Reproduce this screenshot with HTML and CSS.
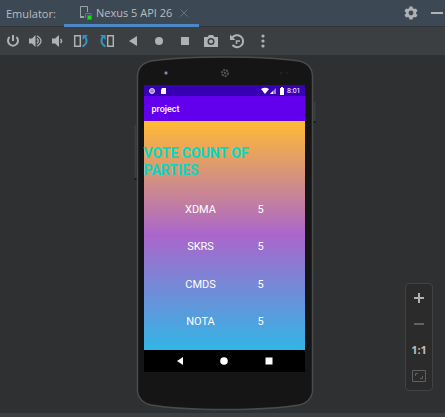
FILE: index.html
```html
<!DOCTYPE html>
<html lang="en">
<head>
<meta charset="utf-8">
<title>Emulator</title>
<link rel="stylesheet" href="styles.css">
</head>
<body>
<header class="titlebar">
  <span class="label">Emulator:</span>
  <div class="tab">
    <svg width="14" height="14" viewBox="0 0 14 14" fill="none"><path d="M5 11.500H2.500v-11h7V6" stroke="#9da2a7"/><path d="M2 11h4" stroke="#9da2a7" stroke-width="2"/><path d="M7.500 12V7.500H13V9" stroke="#8a5bb5"/><rect x="9.500" y="9.500" width="4" height="4" fill="#12e312" stroke="#1d9a2c"/></svg>
    <span>Nexus 5 API 26</span>
    <button class="close" aria-label="Close tab"><svg width="8" height="8" viewBox="0 0 8 8" stroke="#65717b"><path d="M.5.5l7 7M7.500.5l-7 7"/></svg></button>
  </div>
  <div class="window-tools">
    <button aria-label="Settings"><svg width="14" height="14" viewBox="-7 -7 14 14" fill="#afb1b3"><path fill-rule="evenodd" d="M-1.500-6.500h3l.4 1.800 1.300.7 1.800-.6 1.500 2.600-1.400 1.300v1.400l1.400 1.300L5 4.600 3.200 4l-1.300.7-.4 1.800h-3l-.4-1.800L-3.200 4-5 4.600-6.500 2-5.100.7V-.7L-6.500-2-5-4.600-3.200-4l1.300-.7zM0-2.400A2.400 2.400 0 1 0 0 2.400 2.400 2.400 0 1 0 0-2.400z"/></svg></button>
    <button aria-label="Hide"><svg width="12" height="2"><path d="M0 1h12" stroke="#afb1b3" stroke-width="2"/></svg></button>
  </div>
</header>
<nav class="toolbar" aria-label="Device controls">
  <button class="narrow" aria-label="Power"><svg viewBox="0 0 16 16"><path class="line" d="M4.600 4A5 5 0 1 0 11.400 4M8 2v6"/></svg></button>
  <button class="narrow" aria-label="Volume up"><svg viewBox="0 0 16 16"><path d="M2 5.500h3L8.500 2v12L5 10.500H2z"/><path class="thin" d="M10 5.500q2.500 2.500 0 5M10 2.800q8 5.200 0 10.400"/></svg></button>
  <button class="narrow" aria-label="Volume down"><svg viewBox="0 0 16 16"><path d="M3 5.500h3L10 2v12L6 10.500H3z"/><path class="mid" d="M11.500 6q2 2 0 4"/></svg></button>
  <button aria-label="Rotate left"><svg viewBox="0 0 16 16"><path class="mid" d="M1.700 2.700h5.600v10.600H1.700z"/><path class="blue" d="M9.500 13.500Q15.500 10.500 12.500 4"/><path class="bluefill" d="M9.500 7V2h5.500z"/></svg></button>
  <button aria-label="Rotate right"><svg viewBox="0 0 16 16"><path class="mid" d="M8.700 2.700h5.600v10.600H8.700z"/><path class="blue" d="M6.500 13.500Q.5 10.500 3.500 4"/><path class="bluefill" d="M6.500 7V2H1z"/></svg></button>
  <button aria-label="Back"><svg viewBox="0 0 16 16"><path d="M4 8l8-5v10z"/></svg></button>
  <button aria-label="Home"><svg viewBox="0 0 16 16"><circle cx="8" cy="8" r="4"/></svg></button>
  <button aria-label="Overview"><svg viewBox="0 0 16 16"><rect x="4" y="4" width="8" height="8"/></svg></button>
  <button aria-label="Screenshot"><svg viewBox="0 0 16 16"><path fill-rule="evenodd" d="M1 4h3.500L6 2h4l1.500 2H15v10H1zM8 5a3.500 3.500 0 1 0 0 7 3.500 3.500 0 1 0 0-7z"/><circle cx="8" cy="8.500" r="2"/></svg></button>
  <button aria-label="Snapshots"><svg viewBox="0 0 16 16"><path class="line" d="M3 5A6 6 0 1 1 3.500 12"/><path class="mid" d="M7.500 11V8H11"/><path d="M1 1.500V7h5.500z"/></svg></button>
  <button aria-label="More"><svg viewBox="0 0 16 16"><circle cx="8" cy="3" r="1.600"/><circle cx="8" cy="8" r="1.600"/><circle cx="8" cy="13" r="1.600"/></svg></button>
</nav>
<main class="stage">
  <div class="phone">
    <svg class="shell" viewBox="0 0 184 355" preserveAspectRatio="none" fill="none">
      <path d="M2.500 69v54M181.500 46v20" stroke="#3b3c3d" stroke-width="2"/>
      <path d="M1.500 123h2M180.500 66h2" stroke="#17181a" stroke-width="2"/>
      <path d="M4.500 20Q5 8 18 5Q48 1 92 1T166 5Q179 8 179.500 20V336Q178 346 166 349Q140 353.500 92 353.500T18 349Q6 346 4.500 336Z" fill="#151515" stroke="#4a4b4c" stroke-width="1.500"/>
      <circle cx="33" cy="17" r="2" fill="#4c4a63"/><circle cx="33" cy="17" r="1" fill="#a8a5c4"/>
      <circle cx="92" cy="17" r="3" stroke="#555" stroke-width="2" stroke-dasharray="2 1"/><circle cx="92" cy="17" r="1" fill="#666"/>
      <circle cx="148" cy="17" r="1.500" fill="#222"/><circle cx="154" cy="17" r="1" fill="#222"/>
    </svg>
    <section class="screen">
      <div class="status">
        <svg width="18" height="8" viewBox="0 0 18 8"><circle cx="4" cy="4" r="2.500" fill="#9886cf" stroke="#ded6f5"/><path d="M14 1h4v6h-5V3z" fill="#fff"/></svg>
        <svg class="signals" width="24" height="8" viewBox="0 0 24 8" fill="#fff"><path d="M0 2Q4-.5 8 2L4 7z"/><path d="M9 7l6-6v6z" opacity=".5"/><path d="M9 7l3-3v3z"/><path d="M19 1h1V0h2v1h1v7h-4z"/></svg>
        <span>8:01</span>
      </div>
      <div class="appbar">project</div>
      <div class="votes">
        <h1>VOTE COUNT OF PARTIES</h1>
        <table>
          <tbody>
            <tr><th scope="row">XDMA</th><td>5</td></tr>
            <tr><th scope="row">SKRS</th><td>5</td></tr>
            <tr><th scope="row">CMDS</th><td>5</td></tr>
            <tr><th scope="row">NOTA</th><td>5</td></tr>
          </tbody>
        </table>
      </div>
      <div class="navbar">
        <button aria-label="Back"><svg width="8" height="8" viewBox="0 0 8 8"><path d="M1 4l6-4v8z"/></svg></button>
        <button aria-label="Home"><svg width="8" height="8" viewBox="0 0 8 8"><circle cx="4" cy="4" r="3.800"/></svg></button>
        <button aria-label="Overview"><svg width="8" height="8" viewBox="0 0 8 8"><path d="M.5.5h7v7h-7z"/></svg></button>
      </div>
    </section>
  </div>
  <div class="zoom">
    <button aria-label="Zoom in"><svg width="14" height="14" viewBox="0 0 14 14" stroke="#afb1b3" stroke-width="2"><path d="M2 7h10M7 2v10"/></svg></button>
    <button aria-label="Zoom out"><svg width="14" height="14" viewBox="0 0 14 14" stroke="#5f6162" stroke-width="2"><path d="M2 7h10"/></svg></button>
    <button class="ratio">1:1</button>
    <button aria-label="Fit to window"><svg width="14" height="12" viewBox="0 0 14 12" fill="none" stroke="#5f6162"><path d="M.5.5h13v11H.5z"/><path d="M3.500 6V3.500H6M8 8.500h2.500V6"/></svg></button>
  </div>
</main>
<footer class="edge"></footer>
</body>
</html>
```
FILE: styles.css
```css
* { box-sizing: border-box; }

body {
  margin: 0;
  min-height: 100vh;
  display: flex;
  flex-direction: column;
  background: #2f3032;
  color: #bbbdbf;
  font: 11px/16px "Open Sans", "Noto Sans", sans-serif;
}

button {
  display: grid;
  place-items: center;
  padding: 0;
  border: 0;
  background: none;
  color: inherit;
  font: inherit;
}

svg { display: block; }

.titlebar {
  display: flex;
  height: 27px;
  background: #3d4855;
  border-bottom: 1px solid #323538;
}

.label { width: 64px; padding: 6px 0 0 6px; }

.tab {
  display: flex;
  align-items: center;
  gap: 4px;
  height: 27px;
  padding: 4px 11px 2px 14px;
  border-bottom: 3px solid #4a88c7;
}

.close { margin-left: 4px; }

.window-tools {
  display: flex;
  align-items: center;
  gap: 13px;
  margin-left: auto;
  padding-right: 2px;
}

.toolbar {
  display: flex;
  height: 28px;
  padding-left: 2px;
  background: #3c3f41;
}

.toolbar button { width: 26px; }
.toolbar .narrow { width: 22px; }
.toolbar svg { width: 16px; height: 16px; fill: #afb1b3; }
.toolbar .line { fill: none; stroke: #afb1b3; stroke-width: 2; }
.toolbar .mid { fill: none; stroke: #afb1b3; stroke-width: 1.5; }
.toolbar .thin { fill: none; stroke: #afb1b3; stroke-width: 1.3; }
.toolbar .blue { fill: none; stroke: #3592c4; stroke-width: 2; }
.toolbar .bluefill { fill: #3592c4; }

.stage {
  position: relative;
  flex: 1;
  display: flex;
  justify-content: center;
  align-items: flex-start;
  padding-top: 1px;
}

.phone {
  position: relative;
  width: 184px;
  margin-left: 4px;
  padding: 29px 12px 39px 11px;
}

.shell {
  position: absolute;
  inset: 0;
  width: 100%;
  height: 100%;
}

.screen {
  position: relative;
  background: #000;
  color: #fff;
  font-family: Roboto, sans-serif;
}

.status {
  display: flex;
  align-items: center;
  height: 11px;
  padding: 0 4px;
  background: #3700b3;
  font-size: 7px;
  line-height: 9px;
}

.status span { padding-top: 1px; }

.signals { margin: 0 2px 0 auto; }

.appbar {
  height: 25px;
  padding-left: 8px;
  background: #6200ee;
  font-size: 9px;
  font-weight: 500;
  line-height: 26px;
}

.votes {
  padding: 24px 0 9px;
  background: linear-gradient(#ffbb33, #aa66cc 50%, #33b5e5);
}

h1 {
  margin: 0 0 12px;
  color: #03dac5;
  font-size: 14px;
  font-weight: 700;
  line-height: 17px;
}

table {
  height: 150px;
  margin-left: 27px;
  border-collapse: collapse;
  font-size: 11px;
}

th, td {
  width: 60px;
  padding: 0;
  font-weight: 400;
  text-align: center;
}

.navbar {
  display: flex;
  justify-content: space-between;
  height: 22px;
  padding: 0 32px;
}

.navbar svg { fill: #fff; }

.zoom {
  position: absolute;
  right: 12px;
  bottom: 22px;
  display: grid;
  grid-auto-rows: 26px;
  width: 28px;
  padding: 1px 0;
  border: 1px solid #414345;
  border-radius: 4px;
  background: #2b2b2b;
}

.ratio { font-weight: 700; }

.edge { height: 4px; background: #3c3f41; }
```
